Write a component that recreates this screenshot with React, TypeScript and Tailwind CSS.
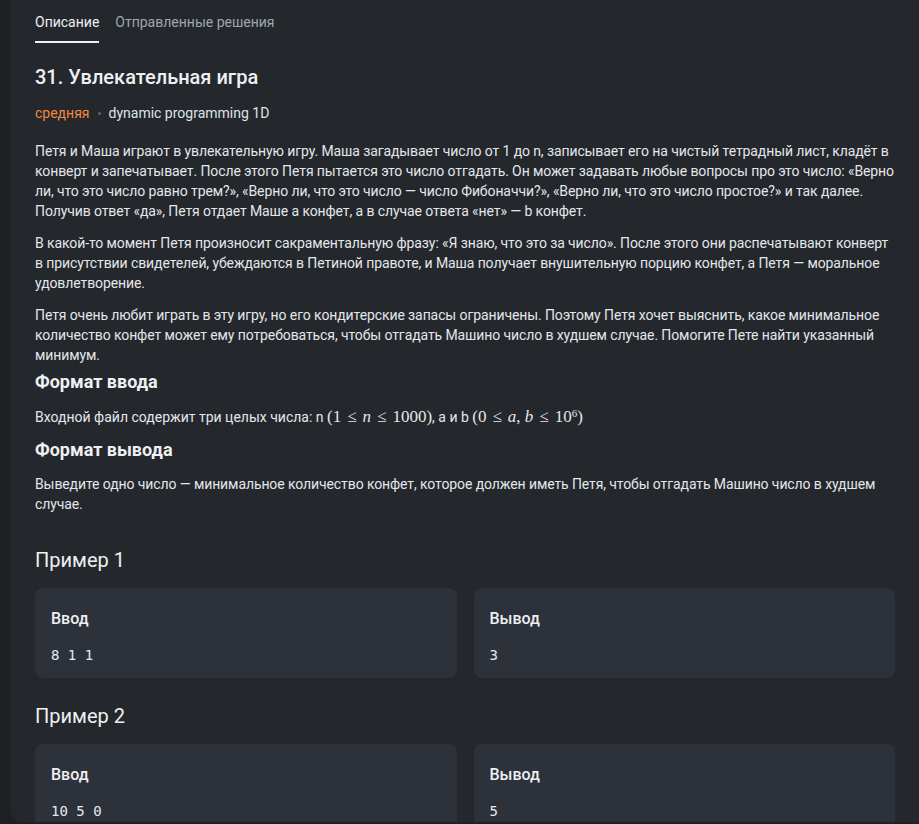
import React from "react";

const font = { fontFamily: "Roboto, 'Noto Sans', sans-serif" };

function Example({ n, input, output, first }: { n: number; input: string; output: string; first?: boolean }) {
    return (
        <section className={first ? "mt-[32px]" : "mt-[24px]"}>
            <h2 className="text-[20px] leading-[28px] text-[#eef0f3]">Пример {n}</h2>
            <div className="mt-[14px] grid grid-cols-2 gap-[17px]">
                <div className="rounded-[8px] bg-[#2d3139] px-[16px] pt-[20px] pb-[13px]">
                    <div className="text-[16px] font-medium leading-[22px] text-[#eef0f3]">Ввод</div>
                    <pre className="mt-[15px] font-['DejaVu_Sans_Mono',monospace] text-[14px] leading-[20px] text-[#e6e9ee]">{input}</pre>
                </div>
                <div className="rounded-[8px] bg-[#2d3139] px-[16px] pt-[20px] pb-[13px]">
                    <div className="text-[16px] font-medium leading-[22px] text-[#eef0f3]">Вывод</div>
                    <pre className="mt-[15px] font-['DejaVu_Sans_Mono',monospace] text-[14px] leading-[20px] text-[#e6e9ee]">{output}</pre>
                </div>
            </div>
        </section>
    );
}

function M({ children }: { children: React.ReactNode }) {
    return <span className="font-['Liberation_Serif',serif] text-[17px]">{children}</span>;
}

function Le() {
    return <span className="mx-[6px]">≤</span>;
}

export default function App() {
    return (
        <div className="min-h-screen bg-[#1e2124] pl-[11px]" style={font}>
            <div className="h-[822px] overflow-hidden rounded-bl-[12px] bg-[#24282c] px-[24px]">
                {/* Tabs */}
                <nav className="flex gap-[16px] text-[14px] leading-[20px]">
                    <div className="border-b-2 border-[#eef0f3] pt-[12px] pb-[9px] text-[#eef0f3]">Описание</div>
                    <div className="pt-[12px] pb-[9px] text-[#a0a6ae]">Отправленные решения</div>
                </nav>

                <h1 className="mt-[20px] text-[20px] font-medium leading-[28px] text-[#eef0f3]">31. Увлекательная игра</h1>

                <div className="mt-[12px] flex items-center text-[14px] leading-[20px]">
                    <span className="text-[#f0883e]">средняя</span>
                    <span className="mx-[8px] h-[3px] w-[3px] rounded-full bg-[#5e646c]" />
                    <span className="text-[#dfe3e8]">dynamic programming 1D</span>
                </div>

                <div className="mt-[18px] space-y-[12px] text-[14px] leading-[20px] tracking-[-0.1px] text-[#e3e6ea]">
                    <p>
                        Петя и Маша играют в увлекательную игру. Маша загадывает число от 1 до n, записывает его на чистый тетрадный лист, кладёт в<br />
                        конверт и запечатывает. После этого Петя пытается это число отгадать. Он может задавать любые вопросы про это число: «Верно<br />
                        ли, что это число равно трем?», «Верно ли, что это число — число Фибоначчи?», «Верно ли, что это число простое?» и так далее.<br />
                        Получив ответ «да», Петя отдает Маше a конфет, а в случае ответа «нет» — b конфет.
                    </p>
                    <p>
                        В какой-то момент Петя произносит сакраментальную фразу: «Я знаю, что это за число». После этого они распечатывают конверт<br />
                        в присутствии свидетелей, убеждаются в Петиной правоте, и Маша получает внушительную порцию конфет, а Петя — моральное<br />
                        удовлетворение.
                    </p>
                    <p>
                        Петя очень любит играть в эту игру, но его кондитерские запасы ограничены. Поэтому Петя хочет выяснить, какое минимальное<br />
                        количество конфет может ему потребоваться, чтобы отгадать Машино число в худшем случае. Помогите Пете найти указанный<br />
                        минимум.
                    </p>
                </div>

                <h3 className="mt-[5px] text-[18px] font-bold leading-[24px] text-[#eef0f3]">Формат ввода</h3>
                <p className="mt-[12px] text-[14px] leading-[22px] text-[#e3e6ea]">
                    Входной файл содержит три целых числа: n{" "}
                    <M>
                        (1<Le /><i>n</i><Le />1000)
                    </M>
                    , a и b{" "}
                    <M>
                        (0<Le /><i>a</i>, <i>b</i><Le />10<sup className="text-[11px]">6</sup>)
                    </M>
                </p>

                <h3 className="mt-[10px] text-[18px] font-bold leading-[24px] text-[#eef0f3]">Формат вывода</h3>
                <p className="mt-[12px] text-[14px] leading-[20px] tracking-[-0.1px] text-[#e3e6ea]">
                    Выведите одно число — минимальное количество конфет, которое должен иметь Петя, чтобы отгадать Машино число в худшем<br />
                    случае.
                </p>

                <Example first n={1} input="8 1 1" output="3" />
                <Example n={2} input="10 5 0" output="5" />
            </div>
        </div>
    );
}
